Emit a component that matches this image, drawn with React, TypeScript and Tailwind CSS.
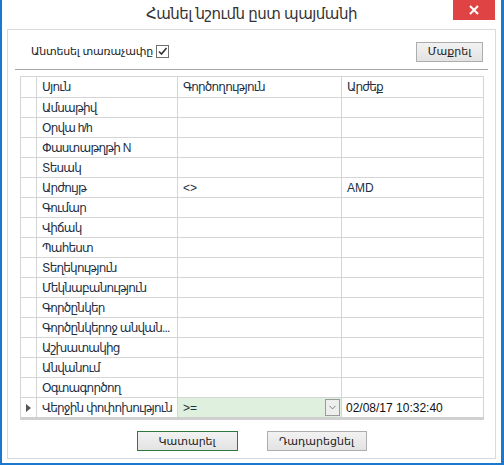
import { ChevronDown } from "lucide-react";

const rows: { name: string; op?: string; value?: string }[] = [
  { name: "Ամսաթիվ" },
  { name: "Օրվա h/h" },
  { name: "Փաստաթղթի N" },
  { name: "Տեսակ" },
  { name: "Արժույթ", op: "<>", value: "AMD" },
  { name: "Գումար" },
  { name: "Վիճակ" },
  { name: "Պահեստ" },
  { name: "Տեղեկություն" },
  { name: "Մեկնաբանություն" },
  { name: "Գործընկեր" },
  { name: "Գործընկերոջ անվան..." },
  { name: "Աշխատակից" },
  { name: "Անվանում" },
  { name: "Օգտագործող" },
];

const cols = "grid grid-cols-[16px_141px_164px_142px]";
const cell = "border-r border-[#d5d5d5] px-[5px] flex items-center whitespace-nowrap overflow-hidden";

export default function App() {
  return (
    <div className="w-[504px] h-[465px] bg-white border-l-2 border-r-[3px] border-b-2 border-[#1a78d0] flex flex-col text-[#222] font-['Liberation_Sans','DejaVu_Sans',sans-serif]">
      {/* title bar */}
      <div className="relative h-[29px] shrink-0 flex items-center justify-center">
        <span className="text-[15px] text-[#333] tracking-[-0.5px]">
          Հանել նշումն ըստ պայմանի
        </span>
        <button className="absolute top-0 right-[6px] w-[42px] h-[20px] bg-[#e04343] flex items-center justify-center">
          <svg width="10" height="10" viewBox="0 0 10 10">
            <path d="M1 1L9 9M9 1L1 9" stroke="white" strokeWidth="2" />
          </svg>
        </button>
      </div>

      {/* body panel */}
      <div className="mx-[5px] h-[430px] border border-[#d9d9d9] flex flex-col pt-[12px]">
        <div className="h-[19px] flex items-center justify-between pl-[23px] pr-[12px]">
          <label className="flex items-center gap-[3px] text-[11px] tracking-[-0.2px] text-[#222]">
            Անտեսել տառաչափը
            <span className="w-[13px] h-[13px] border border-[#707070] bg-white flex items-center justify-center">
              <svg width="11" height="11" viewBox="0 0 11 11">
                <path d="M2 5.5L4.5 8L9.5 2" stroke="#333" strokeWidth="1.6" fill="none" />
              </svg>
            </span>
          </label>
          <button className="w-[67px] h-[20px] border border-[#adadad] bg-gradient-to-b from-[#f2f2f2] to-[#e3e3e3] text-[11px] text-[#222]">
            Մաքրել
          </button>
        </div>

        <div className="mt-[8px] mx-[7px] h-px bg-[#a7a7a7]" />

        {/* grid */}
        <div className="mt-[6px] ml-[12px] w-[464px] border-l border-t border-[#d5d5d5] text-[12px] tracking-[-0.8px] text-[#223044]">
          <div className={`${cols} h-[21px] border-b border-[#d5d5d5]`}>
            <div className={cell} />
            <div className={cell}>Սյուն</div>
            <div className={cell}>Գործողություն</div>
            <div className={cell}>Արժեք</div>
          </div>
          {rows.map((r) => (
            <div key={r.name} className={`${cols} h-[20px] border-b border-[#d5d5d5]`}>
              <div className={cell} />
              <div className={cell}>{r.name}</div>
              <div className={`${cell} tracking-normal`}>{r.op}</div>
              <div className={`${cell} tracking-normal`}>{r.value}</div>
            </div>
          ))}
          <div className={`${cols} h-[22px] border-b-[3px] border-[#d0d0d0]`}>
            <div className={`${cell} justify-center`}>
              <svg width="5" height="8" viewBox="0 0 5 8">
                <path d="M0 0L5 4L0 8Z" fill="#555" />
              </svg>
            </div>
            <div className={cell}>Վերջին փոփոխություն</div>
            <div className="border-r border-[#d5d5d5] bg-[#dff0df] flex items-center justify-between pl-[5px] pr-[1px] tracking-normal">
              <span>&gt;=</span>
              <span className="w-[15px] h-[17px] border border-[#9a9a9a] bg-[#eeeeee] flex items-center justify-center">
                <ChevronDown size={11} strokeWidth={1.6} color="#555" />
              </span>
            </div>
            <div className="border-r border-[#d5d5d5] px-[4px] flex items-center text-[12px] tracking-normal text-[#111]">
              02/08/17 10:32:40
            </div>
          </div>
        </div>

        {/* bottom buttons */}
        <div className="mt-[11px] flex justify-center gap-[29px]">
          <button className="w-[101px] h-[20px] border border-[#2f7a3a] bg-gradient-to-b from-[#f2f2f2] to-[#e3e3e3] text-[11px] text-[#222]">
            Կատարել
          </button>
          <button className="w-[100px] h-[20px] border border-[#adadad] bg-gradient-to-b from-[#f2f2f2] to-[#e3e3e3] text-[11px] text-[#222]">
            Դադարեցնել
          </button>
        </div>
      </div>
    </div>
  );
}
